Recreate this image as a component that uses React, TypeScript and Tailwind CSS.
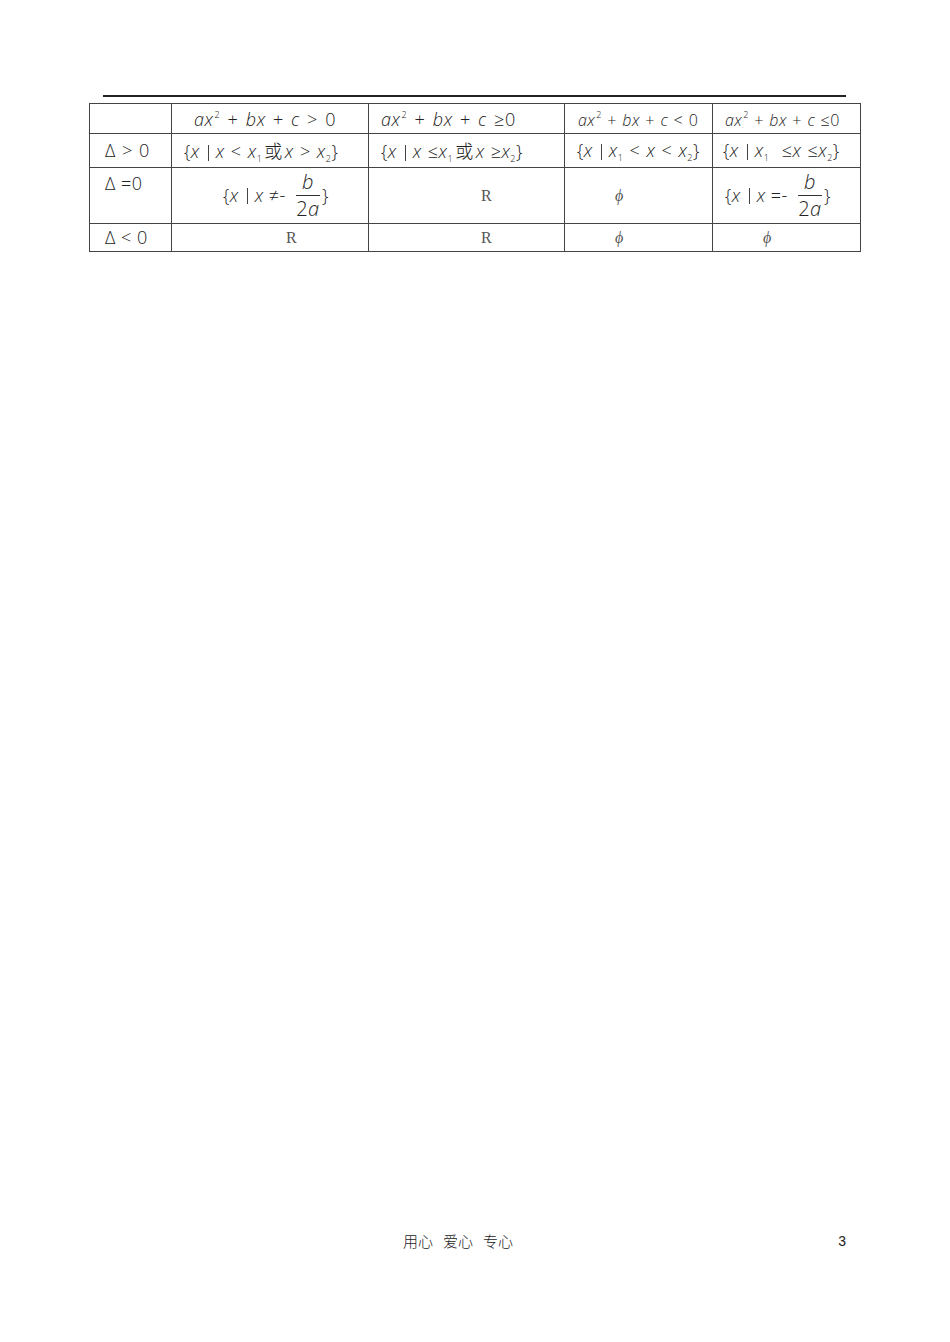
/* eslint-disable */
const math = { fontFamily: '"Open Sans", "DejaVu Sans", sans-serif' };
const serif = { fontFamily: '"Liberation Serif", "Noto Sans CJK SC", serif' };
const cjk = { fontFamily: '"Noto Sans CJK SC", sans-serif' };

function V({ children }: { children: React.ReactNode }) {
  return <i className="italic">{children}</i>;
}

function Sub({ n }: { n: string }) {
  return <sub className="text-[9px] align-baseline relative top-[4px]">{n}</sub>;
}

function Bar() {
  return <span className="inline-block w-px h-[16px] bg-[#444] align-[-3px] ml-[8px] mr-[7px]" />;
}

function Quad({ op, small }: { op: string; small?: boolean }) {
  return (
    <span className={small ? "text-[16px] tracking-[0.4px] [word-spacing:1px]" : "text-[18px] tracking-[0.6px] [word-spacing:2px]"}>
      <V>ax</V>
      <sup className="text-[9px] align-baseline relative -top-[8px] ml-[1px]">2</sup> + <V>bx</V> + <V>c</V> {op}0
    </span>
  );
}

function Frac() {
  return (
    <span className="inline-flex flex-col items-center ml-[10px] mr-[2px] leading-none">
      <span className="italic text-[20px] pb-[3px]">b</span>
      <span className="w-[24px] h-px bg-[#333]" />
      <span className="text-[20px] pt-[3px]">
        2<i>a</i>
      </span>
    </span>
  );
}

export default function App() {
  const cell = "border border-[#444] p-0";
  const sym = "text-[16px] font-normal text-[#555]";
  return (
    <div className="w-[950px] h-[1342px] bg-white text-[#222] font-light flex flex-col" style={math}>
      {/* header rule */}
      <div className="mt-[95px] ml-[103px] w-[743px] h-[2px] bg-[#222]" />

      {/* table */}
      <table className="mt-[6px] ml-[89px] w-[771px] border-collapse table-fixed">
        <colgroup>
          <col className="w-[82px]" />
          <col className="w-[197px]" />
          <col className="w-[196px]" />
          <col className="w-[148px]" />
          <col className="w-[148px]" />
        </colgroup>
        <tbody>
          <tr className="h-[30px]">
            <td className={cell}></td>
            <td className={cell + " pl-[22px] pt-[2px]"}>
              <Quad op="> " />
            </td>
            <td className={cell + " pl-[12px] pt-[2px]"}>
              <Quad op="≥" />
            </td>
            <td className={cell + " pl-[13px] pt-[2px]"}>
              <Quad op="< " small />
            </td>
            <td className={cell + " pl-[12px] pt-[2px]"}>
              <Quad op="≤" small />
            </td>
          </tr>
          <tr className="h-[34px] text-[18px] tracking-[0.5px] [word-spacing:1px] whitespace-nowrap">
            <td className={cell + " pl-[15px]"}>Δ &gt; 0</td>
            <td className={cell + " pl-[12px]"}>
              {"{"}<V>x</V><Bar /><V>x</V> &lt; <V>x</V><Sub n="1" /><span style={cjk} className="mx-[2px]">或</span><V>x</V> &gt; <V>x</V><Sub n="2" />{"}"}
            </td>
            <td className={cell + " pl-[12px]"}>
              {"{"}<V>x</V><Bar /><V>x</V> ≤<V>x</V><Sub n="1" /><span style={cjk} className="mx-[2px]">或</span><V>x</V> ≥<V>x</V><Sub n="2" />{"}"}
            </td>
            <td className={cell + " pl-[12px]"}>
              {"{"}<V>x</V><Bar /><V>x</V><Sub n="1" /> &lt; <V>x</V> &lt; <V>x</V><Sub n="2" />{"}"}
            </td>
            <td className={cell + " pl-[10px]"}>
              {"{"}<V>x</V><Bar /><V>x</V><Sub n="1" />&nbsp; ≤<V>x</V> ≤<V>x</V><Sub n="2" />{"}"}
            </td>
          </tr>
          <tr className="h-[56px] text-[18px] tracking-[0.5px]">
            <td className={cell + " pl-[15px] align-top pt-[2px]"}>Δ =0</td>
            <td className={cell + " pl-[51px]"}>
              <span className="inline-flex items-center">
                {"{"}<V>x</V><Bar /><V>x</V>&nbsp;≠-<Frac />{"}"}
              </span>
            </td>
            <td className={cell + " pl-[112px] " + sym} style={serif}>R</td>
            <td className={cell + " pl-[50px] italic " + sym} style={serif}>ϕ</td>
            <td className={cell + " pl-[12px]"}>
              <span className="inline-flex items-center">
                {"{"}<V>x</V><Bar /><V>x</V>&nbsp;=-<Frac />{"}"}
              </span>
            </td>
          </tr>
          <tr className="h-[27px]">
            <td className={cell + " pl-[15px] text-[18px] tracking-[0.5px]"}>Δ &lt; 0</td>
            <td className={cell + " pl-[114px] " + sym} style={serif}>R</td>
            <td className={cell + " pl-[112px] " + sym} style={serif}>R</td>
            <td className={cell + " pl-[50px] italic " + sym} style={serif}>ϕ</td>
            <td className={cell + " pl-[50px] italic " + sym} style={serif}>ϕ</td>
          </tr>
        </tbody>
      </table>

      {/* footer */}
      <div className="mt-auto mb-[90px] flex items-end text-[15px] font-light">
        <span className="ml-[403px] flex gap-[10px]" style={cjk}>
          <span>用心</span>
          <span>爱心</span>
          <span>专心</span>
        </span>
        <span className="ml-auto mr-[104px] text-[14px] font-normal" style={{ fontFamily: '"Liberation Sans", sans-serif' }}>
          3
        </span>
      </div>
    </div>
  );
}
